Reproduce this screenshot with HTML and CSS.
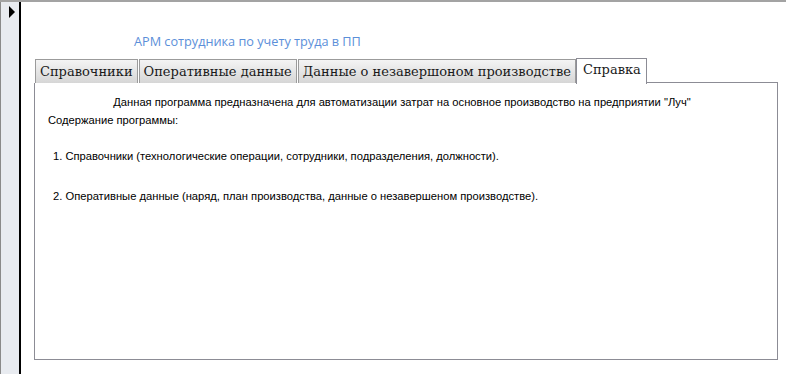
FILE: index.html
```html
<!DOCTYPE html>
<html lang="ru">
<head>
  <meta charset="UTF-8" />
  <title>АРМ сотрудника по учету труда в ПП</title>
  <link rel="stylesheet" href="styles.css">
</head>
<body>
  <div class="frame">
    <div class="selector">
      <span class="arrow"></span>
    </div>
    <div class="form">
      <h1 class="title">АРМ сотрудника по учету труда в ПП</h1>
      <div class="tabs">
        <div class="tab">Справочники</div>
        <div class="tab">Оперативные данные</div>
        <div class="tab">Данные о незавершоном производстве</div>
        <div class="tab active">Справка</div>
        <div class="tab-rest"></div>
      </div>
      <div class="panel">
        <p class="lead">Данная программа предназначена для автоматизации затрат на основное производство на предприятии "Луч"</p>
        <p class="caption">Содержание программы:</p>
        <p class="item">1. Справочники (технологические операции, сотрудники, подразделения, должности).</p>
        <p class="item">2. Оперативные данные (наряд, план производства, данные о незавершеном производстве).</p>
      </div>
    </div>
  </div>
</body>
</html>
```

FILE: styles.css
```css
body {
  margin: 0;
  background: #ffffff;
  font-family: "Liberation Sans", Tahoma, sans-serif;
}
.frame {
  display: flex;
  height: 372px;
  border-top: 2px solid #a3a3a3;
}
.selector {
  width: 18px;
  background: #e8ebf0;
  border-left: 1px solid #8a8a8a;
  border-right: 2px solid #000000;
}
.arrow {
  display: block;
  width: 0;
  height: 0;
  margin: 4px 0 0 8px;
  border-top: 6px solid transparent;
  border-bottom: 6px solid transparent;
  border-left: 6px solid #000000;
}
.form {
  flex: 1;
  padding: 0 0 0 13px;
}
.title {
  margin: 29px 0 0 100px;
  font-family: "Open Sans", sans-serif;
  font-weight: normal;
  font-size: 12.7px;
  color: #5b8fd9;
  height: 26px;
  line-height: 20px;
}
.tabs {
  display: flex;
  align-items: flex-end;
  height: 26px;
}
.tab {
  height: 23px;
  margin-left: 1px;
  padding: 0 4px;
  border: 1px solid #9b9b9b;
  border-bottom: none;
  background: linear-gradient(#f4f4f4, #d6d6d6);
  font-family: "DejaVu Serif", serif;
  font-size: 13px;
  line-height: 23px;
  color: #1a1a1a;
}
.tab:first-child {
  margin-left: 1px;
}
.tab.active {
  height: 25px;
  margin-left: 0;
  padding: 0 5px 0 6px;
  background: #ffffff;
  border-color: #8c8c95;
  position: relative;
  top: 1px;
  line-height: 21px;
}
.tab-rest {
  flex: 1;
  border-bottom: 1px solid #8c8c95;
  margin-right: 8px;
}
.panel {
  width: 742px;
  height: 276px;
  border: 1px solid #8c8c95;
  border-top: none;
  font-size: 11.2px;
  line-height: 14px;
  color: #000000;
}
.panel p {
  margin: 0;
}
.lead {
  padding: 12px 8px 0 0;
  text-align: center;
}
.caption {
  padding: 4px 0 0 13px;
}
.item {
  padding: 22px 0 0 18px;
}
.item + .item {
  padding-top: 26px;
}
```
